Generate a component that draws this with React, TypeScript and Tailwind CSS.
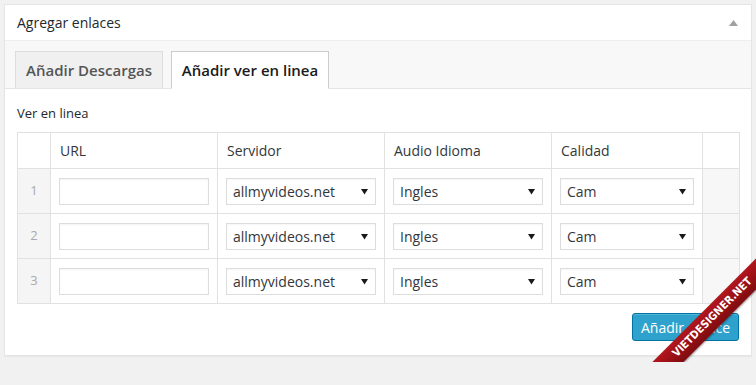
import React from "react";

const rows = [1, 2, 3];

const Arrow = () => (
  <svg width="7" height="7" viewBox="0 0 7 7" className="shrink-0">
    <path d="M0 1 L7 1 L3.5 6.5 Z" fill="#1a1a1a" />
  </svg>
);

const FakeSelect = ({ value, width }: { value: string; width: string }) => (
  <div
    className={`${width} h-[27px] border border-[#dddddd] bg-white flex items-center justify-between pl-[6px] pr-[7px] text-[14px] text-[#32373c] shadow-[inset_0_1px_2px_rgba(0,0,0,0.04)]`}
  >
    <span>{value}</span>
    <Arrow />
  </div>
);

const App = () => {
  return (
    <div
      className="relative w-[756px] h-[385px] bg-[#f1f1f1] pt-[4px] pl-[4px] overflow-hidden"
      style={{ fontFamily: '"Open Sans", "Liberation Sans", sans-serif' }}
    >
      <div className="w-[748px] h-[352px] bg-white border border-[#e5e5e5] shadow-[0_1px_1px_rgba(0,0,0,0.04)] flex flex-col">
        {/* header */}
        <div className="h-[36px] shrink-0 flex items-center justify-between pl-[12px] pr-[13px] border-b border-[#eeeeee]">
          <span className="text-[14px] text-[#23282d]">Agregar enlaces</span>
          <svg width="9" height="6" viewBox="0 0 9 6">
            <path d="M0 6 L4.5 0 L9 6 Z" fill="#a0a0a0" />
          </svg>
        </div>

        {/* tabs */}
        <div className="h-[48px] shrink-0 bg-[#f8f8f8] border-b border-[#e5e5e5] flex items-end gap-[8px] pl-[10px]">
          <div className="h-[38px] -mb-px w-[148px] flex items-center justify-center border border-[#dddddd] border-b-[#e5e5e5] bg-[#f0f0f0] text-[15px] font-semibold text-[#555555]">
            Añadir Descargas
          </div>
          <div className="h-[38px] -mb-px w-[158px] flex items-center justify-center border border-[#cccccc] border-b-white bg-white text-[15px] font-semibold text-[#1a1a1a]">
            Añadir ver en linea
          </div>
        </div>

        {/* content */}
        <div className="flex flex-col pl-[12px] pr-[11px]">
          <div className="h-[43px] flex items-center pt-[6px] text-[13px] text-[#23282d]">Ver en linea</div>
          <table className="border-collapse w-[722px] table-fixed">
            <colgroup>
              <col className="w-[33px]" />
              <col className="w-[167px]" />
              <col className="w-[167px]" />
              <col className="w-[167px]" />
              <col className="w-[151px]" />
              <col className="w-[37px]" />
            </colgroup>
            <thead>
              <tr className="h-[36px]">
                <th className="border border-[#e1e1e1]"></th>
                {["URL", "Servidor", "Audio Idioma", "Calidad"].map((h) => (
                  <th key={h} className="border border-[#e1e1e1] text-left font-normal pl-[9px] text-[14px] text-[#32373c]">
                    {h}
                  </th>
                ))}
                <th className="border border-[#e1e1e1]"></th>
              </tr>
            </thead>
            <tbody>
              {rows.map((n) => (
                <tr key={n} className="h-[45px]">
                  <td className="border border-[#e1e1e1] bg-[#f5f5f5] text-center text-[13px] text-[#aaaaaa]">{n}</td>
                  <td className="border border-[#e1e1e1] pl-[8px]">
                    <div className="w-[150px] h-[27px] border border-[#dddddd] bg-white shadow-[inset_0_1px_2px_rgba(0,0,0,0.05)]"></div>
                  </td>
                  <td className="border border-[#e1e1e1] pl-[8px]">
                    <FakeSelect value="allmyvideos.net" width="w-[150px]" />
                  </td>
                  <td className="border border-[#e1e1e1] pl-[8px]">
                    <FakeSelect value="Ingles" width="w-[150px]" />
                  </td>
                  <td className="border border-[#e1e1e1] pl-[8px]">
                    <FakeSelect value="Cam" width="w-[134px]" />
                  </td>
                  <td className="border border-[#e1e1e1] bg-[#f7f7f7]"></td>
                </tr>
              ))}
            </tbody>
          </table>
          <div className="flex justify-end pt-[9px] pr-px">
            <button className="h-[28px] w-[107px] rounded-[3px] bg-[#2ea2cc] border border-[#0074a2] text-white text-[14px] shadow-[inset_0_1px_0_rgba(120,200,230,0.5)]">
              Añadir enlace
            </button>
          </div>
        </div>
      </div>

      {/* corner ribbon watermark */}
      <div className="absolute right-0 top-[250px] w-[110px] h-[112px] overflow-hidden pointer-events-none">
        <div
          className="absolute left-[-30px] top-[48px] w-[210px] h-[22px] -rotate-45 bg-gradient-to-b from-[#b3161d] via-[#9a1016] to-[#7d0c10] flex items-center justify-center pr-[24px] text-white font-bold text-[11px] shadow-[0_1px_2px_rgba(0,0,0,0.4)]"
          style={{ fontFamily: '"DejaVu Sans Condensed", "DejaVu Sans", sans-serif' }}
        >
          VIETDESIGNER.NET
        </div>
      </div>
    </div>
  );
};

export default App;
